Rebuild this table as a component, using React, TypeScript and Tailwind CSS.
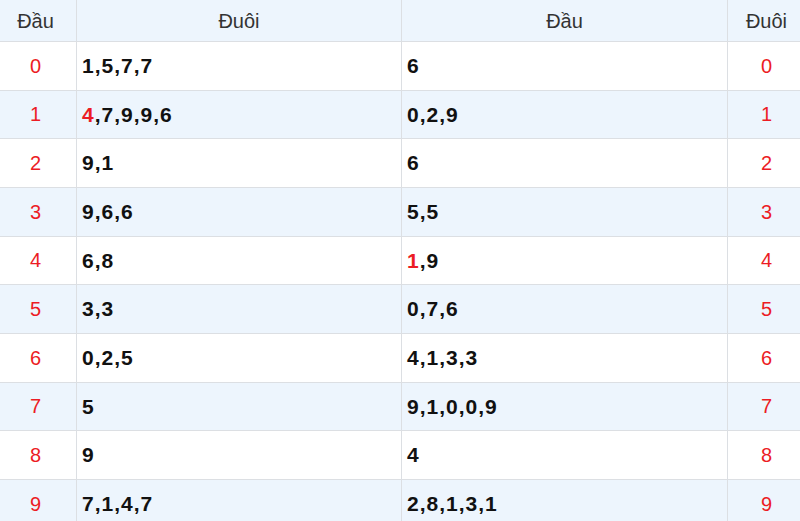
import React from "react";

type Part = { t: string; red?: boolean };
const rows: { d: string; a: Part[]; b: Part[] }[] = [
  { d: "0", a: [{ t: "1,5,7,7" }], b: [{ t: "6" }] },
  { d: "1", a: [{ t: "4", red: true }, { t: ",7,9,9,6" }], b: [{ t: "0,2,9" }] },
  { d: "2", a: [{ t: "9,1" }], b: [{ t: "6" }] },
  { d: "3", a: [{ t: "9,6,6" }], b: [{ t: "5,5" }] },
  { d: "4", a: [{ t: "6,8" }], b: [{ t: "1", red: true }, { t: ",9" }] },
  { d: "5", a: [{ t: "3,3" }], b: [{ t: "0,7,6" }] },
  { d: "6", a: [{ t: "0,2,5" }], b: [{ t: "4,1,3,3" }] },
  { d: "7", a: [{ t: "5" }], b: [{ t: "9,1,0,0,9" }] },
  { d: "8", a: [{ t: "9" }], b: [{ t: "4" }] },
  { d: "9", a: [{ t: "7,1,4,7" }], b: [{ t: "2,8,1,3,1" }] },
];

function Parts({ parts }: { parts: Part[] }) {
  return (
    <>
      {parts.map((p, i) => (
        <span key={i} className={p.red ? "text-[#ec1c24]" : "text-[#111]"}>
          {p.t}
        </span>
      ))}
    </>
  );
}

export default function App() {
  return (
    <div
      className="w-[800px] h-[521px] overflow-hidden bg-white"
      style={{ fontFamily: '"Liberation Sans", Arial, sans-serif' }}
    >
      <div className="grid grid-cols-[76px_325px_326px_73px] border-b border-[#dcdfe3] bg-[#edf5fd] h-[42px] text-[20px] text-[#333]">
        <div className="flex items-center justify-center pr-[5px]">Đầu</div>
        <div className="flex items-center justify-center border-l border-[#dcdfe3]">Đuôi</div>
        <div className="flex items-center justify-center border-l border-[#dcdfe3]">Đầu</div>
        <div className="flex items-center justify-center border-l border-[#dcdfe3] pl-[5px]">Đuôi</div>
      </div>
      {rows.map((r, i) => (
        <div
          key={r.d}
          className={
            "grid grid-cols-[76px_325px_326px_73px] border-b border-[#dcdfe3] h-[48.67px] " +
            (i % 2 === 1 ? "bg-[#edf5fd]" : "bg-white")
          }
        >
          <div className="flex items-center justify-center pr-[5px] text-[20px] text-[#ec1c24]">
            {r.d}
          </div>
          <div className="flex items-center border-l border-[#dcdfe3] pl-[5px] text-[21px] font-bold tracking-[1px]">
            <Parts parts={r.a} />
          </div>
          <div className="flex items-center border-l border-[#dcdfe3] pl-[5px] text-[21px] font-bold tracking-[1px]">
            <Parts parts={r.b} />
          </div>
          <div className="flex items-center justify-center border-l border-[#dcdfe3] pl-[5px] text-[20px] text-[#ec1c24]">
            {r.d}
          </div>
        </div>
      ))}
    </div>
  );
}
